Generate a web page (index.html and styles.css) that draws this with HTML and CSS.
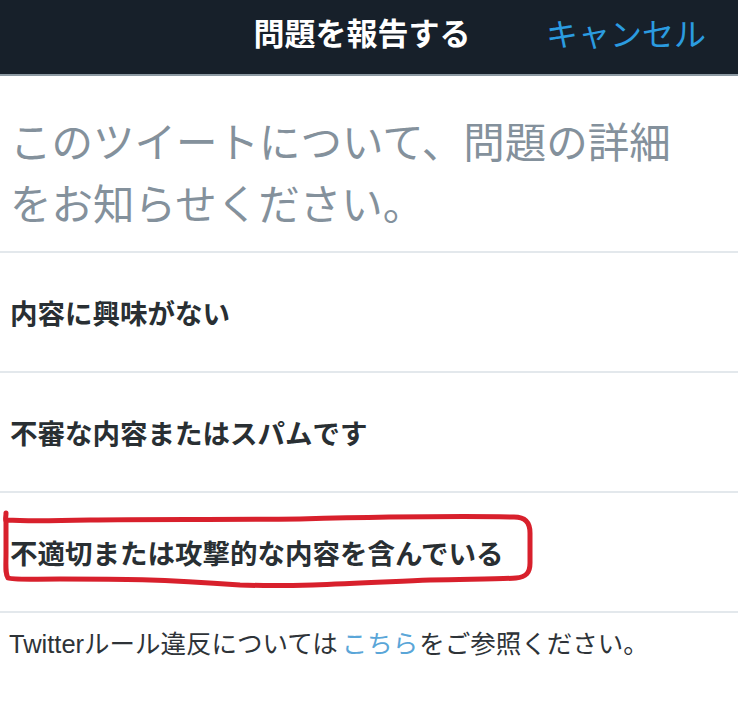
FILE: index.html
```html
<!DOCTYPE html>
<html lang="ja">
<head>
<meta charset="utf-8">
<title>問題を報告する</title>
<link rel="stylesheet" href="styles.css">
</head>
<body>
<header class="topbar">
  <div class="spacer"></div>
  <h1 class="title">問題を報告する</h1>
  <div class="cancel">キャンセル</div>
</header>
<main>
  <p class="prompt">このツイートについて、問題の詳細をお知らせください。</p>
  <ul class="options">
    <li class="option">内容に興味がない</li>
    <li class="option">不審な内容またはスパムです</li>
    <li class="option marked">不適切または攻撃的な内容を含んでいる
      <svg class="mark" width="738" height="118" viewBox="0 0 738 118" aria-hidden="true">
        <path d="M6 20 C 6 24, 5 26, 6 29 L 6 60 C 6 74, 5 80, 8 85 C 14 87, 30 86, 60 86 C 120 86, 160 86, 240 92 C 300 94, 360 90, 430 87 C 480 86, 505 86, 516 85 C 526 84, 530 80, 530 70 L 530 40 C 530 29, 525 24, 514 24 C 460 23, 380 24, 300 26 C 220 27, 150 26, 90 27 C 50 28, 20 28, 7 27" fill="none" stroke="#d8202c" stroke-width="5" stroke-linecap="round" stroke-linejoin="round"/>
      </svg>
    </li>
  </ul>
  <p class="footer">Twitterルール違反については<span class="link">こちら</span>をご参照ください。</p>
</main>
</body>
</html>
```
FILE: styles.css
```css
html, body {
  margin: 0;
  padding: 0;
  background: #ffffff;
}
body {
  font-family: "Liberation Sans", "Noto Sans CJK JP", sans-serif;
  width: 738px;
  height: 722px;
  overflow: hidden;
}
.topbar {
  display: grid;
  grid-template-columns: 1fr auto 1fr;
  align-items: start;
  height: 76px;
  box-sizing: border-box;
  padding-top: 12px;
  background: #17202a;
  border-bottom: 2px solid #8d9aa3;
}
.title {
  margin: 0;
  padding-right: 14px;
  font-family: "Noto Sans CJK JP", sans-serif;
  font-size: 31px;
  line-height: 40px;
  font-weight: 700;
  color: #ffffff;
}
.cancel {
  justify-self: end;
  padding-right: 32px;
  font-family: "Noto Sans CJK JP", sans-serif;
  font-size: 32px;
  line-height: 40px;
  color: #2b9ce0;
}
main {
  display: flex;
  flex-direction: column;
}
.prompt {
  margin: 0;
  padding: 33px 40px 18px 10px;
  font-family: "Noto Sans CJK JP", sans-serif;
  font-size: 41.5px;
  line-height: 62px;
  color: #84919c;
  border-bottom: 2px solid #e3e8ec;
}
.options {
  list-style: none;
  margin: 0;
  padding: 0;
}
.option {
  position: relative;
  height: 118px;
  display: flex;
  align-items: center;
  padding-left: 10px;
  font-family: "Noto Sans CJK JP", sans-serif;
  font-size: 27.5px;
  font-weight: 700;
  color: #292f33;
  border-bottom: 2px solid #e3e8ec;
}
.mark {
  position: absolute;
  left: 0;
  top: 0;
  pointer-events: none;
}
.footer {
  margin: 0;
  padding: 13px 0 0 9px;
  font-size: 25.5px;
  line-height: 36px;
  color: #2e3338;
}
.link {
  margin: 0 1px 0 4px;
  color: #5aa6d8;
}
```
